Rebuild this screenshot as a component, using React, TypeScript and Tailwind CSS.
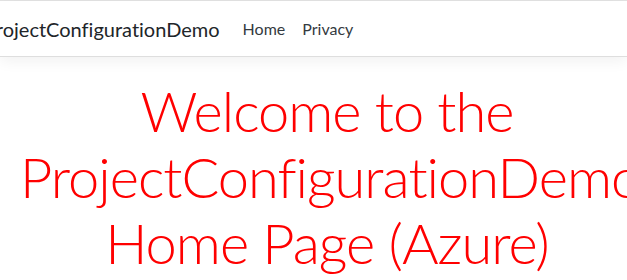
import React from "react";

const App: React.FC = () => {
  return (
    <div className="min-h-screen w-[627px] overflow-hidden bg-white font-['Lato','Open_Sans',sans-serif] [font-variant-ligatures:none]">
      <header className="border-t border-[#e3e3e3]">
        <nav className="flex h-[56px] items-center border-b border-[#dedede] bg-white shadow-[0_4px_14px_rgba(0,0,0,0.06)]">
          <div className="ml-[-16px] flex items-center">
            <a className="mr-[23px] text-[20px] text-[#212529]">ProjectConfigurationDemo</a>
            <ul className="flex items-center gap-[17px] text-[16px] text-[#343a40]">
              <li>Home</li>
              <li>Privacy</li>
            </ul>
          </div>
        </nav>
      </header>
      <main className="w-[654px] px-[20px] pt-[21px]">
        <h1 className="whitespace-nowrap text-center text-[56px] leading-[66px] font-light tracking-[-1px] text-[#ff0000]">
          Welcome to the
          <br />
          ProjectConfigurationDemo
          <br />
          Home Page (Azure)
        </h1>
      </main>
    </div>
  );
};

export default App;
